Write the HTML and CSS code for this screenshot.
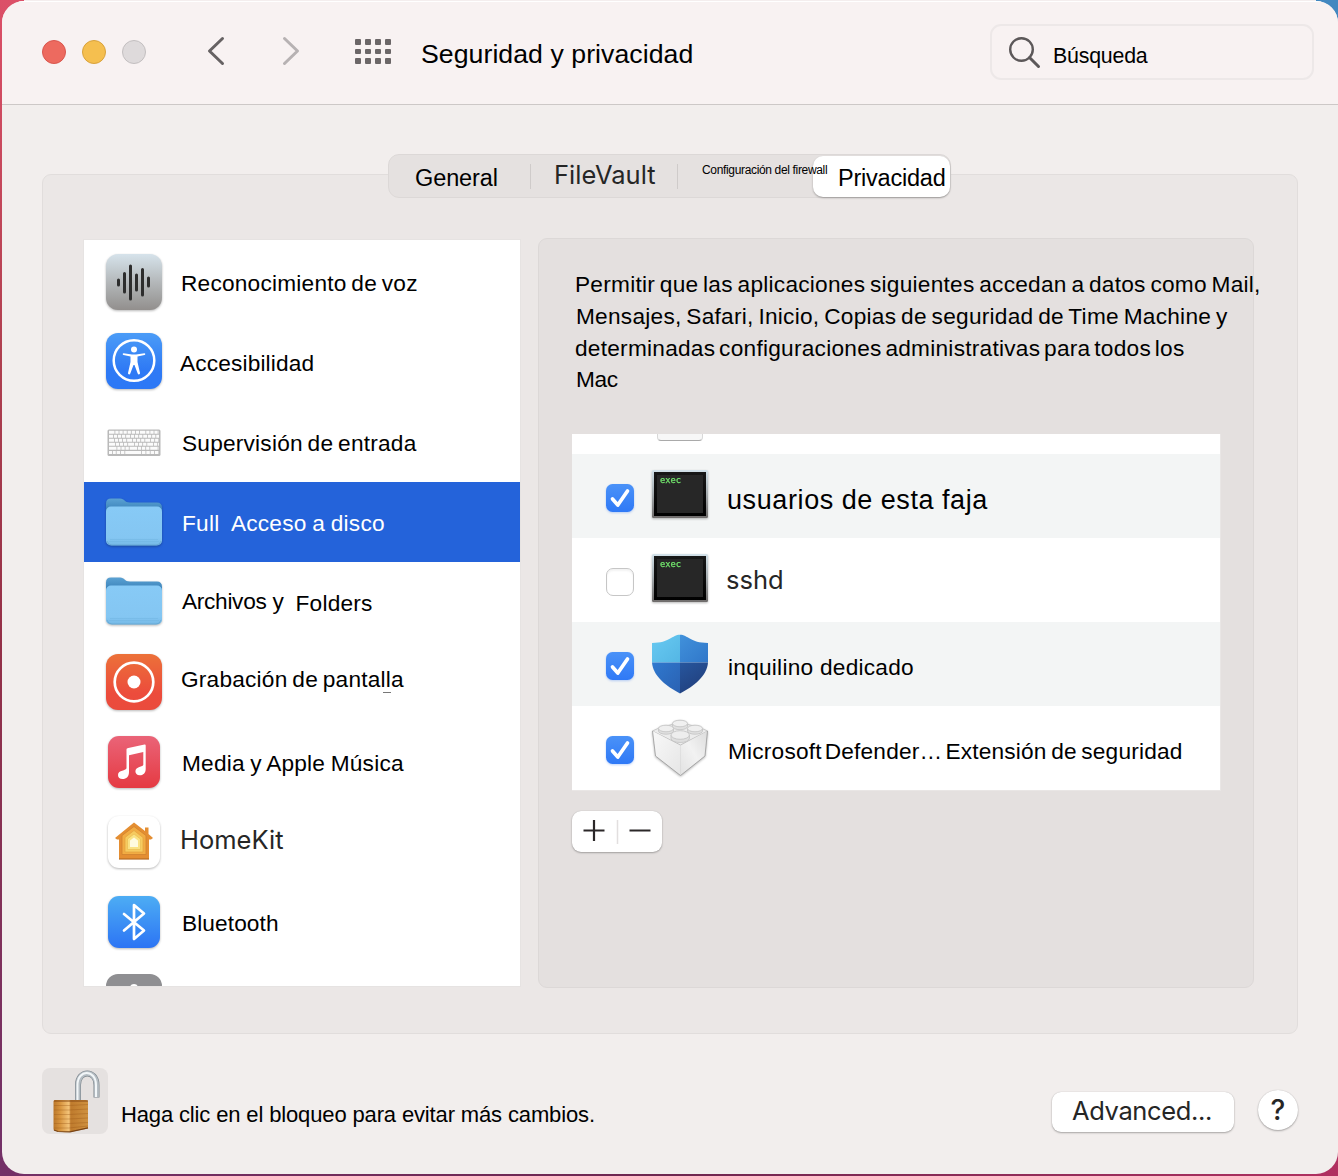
FILE: index.html
```html
<!DOCTYPE html>
<html lang="es">
<head>
<meta charset="utf-8">
<title>Seguridad y privacidad</title>
<link rel="stylesheet" href="styles.css">
</head>
<body>
<svg class="defs" width="0" height="0" aria-hidden="true">
  <defs>
    <linearGradient id="gVoice" x1="0" y1="0" x2="0" y2="1"><stop offset="0" stop-color="#d6e3eb"/><stop offset=".5" stop-color="#b4b8ba"/><stop offset="1" stop-color="#928f8d"/></linearGradient>
    <linearGradient id="gBlue" x1="0" y1="0" x2="0" y2="1"><stop offset="0" stop-color="#4b9cf7"/><stop offset=".65" stop-color="#2f7af5"/><stop offset="1" stop-color="#2c78f6"/></linearGradient>
    <linearGradient id="gCheck" x1="0" y1="0" x2="0" y2="1"><stop offset="0" stop-color="#4a92f8"/><stop offset="1" stop-color="#2f79f6"/></linearGradient>
    <linearGradient id="gBt" x1="0" y1="0" x2="0" y2="1"><stop offset="0" stop-color="#4dadf4"/><stop offset="1" stop-color="#2c74f4"/></linearGradient>
    <linearGradient id="gRec" x1="0" y1="0" x2="0" y2="1"><stop offset="0" stop-color="#ec7139"/><stop offset=".7" stop-color="#ec4c3c"/><stop offset="1" stop-color="#ea4b3c"/></linearGradient>
    <linearGradient id="gMusic" x1="0" y1="0" x2="0" y2="1"><stop offset="0" stop-color="#ea6478"/><stop offset="1" stop-color="#e53a42"/></linearGradient>
    <linearGradient id="gFront" x1="0" y1="0" x2="0" y2="1"><stop offset="0" stop-color="#87caf6"/><stop offset=".8" stop-color="#84c6f2"/><stop offset="1" stop-color="#75b9e6"/></linearGradient>
    <linearGradient id="gBack" x1="0" y1="0" x2="0" y2="1"><stop offset="0" stop-color="#5ba2d3"/><stop offset=".35" stop-color="#3f86bd"/></linearGradient>
    <linearGradient id="gFrame" x1="0" y1="0" x2="0" y2="1"><stop offset="0" stop-color="#d3e2ea"/><stop offset=".5" stop-color="#a5abae"/><stop offset="1" stop-color="#6f6c6b"/></linearGradient>
    <linearGradient id="gScreen" x1="0" y1="0" x2="0" y2="1"><stop offset="0" stop-color="#181818"/><stop offset="1" stop-color="#000"/></linearGradient>
    <linearGradient id="gS1" x1="0" y1="0" x2="1" y2="1"><stop offset="0" stop-color="#68caf2"/><stop offset="1" stop-color="#54b6e4"/></linearGradient>
    <linearGradient id="gS2" x1="0" y1="0" x2="1" y2="1"><stop offset="0" stop-color="#4191db"/><stop offset="1" stop-color="#3077c9"/></linearGradient>
    <linearGradient id="gS3" x1="0" y1="0" x2="1" y2="1"><stop offset="0" stop-color="#2f79cf"/><stop offset="1" stop-color="#2a61b2"/></linearGradient>
    <linearGradient id="gS4" x1="0" y1="0" x2=".6" y2="1"><stop offset="0" stop-color="#27569e"/><stop offset="1" stop-color="#213f7c"/></linearGradient>
    <linearGradient id="gWood" x1="0" y1="0" x2="1" y2="0"><stop offset="0" stop-color="#bb772a"/><stop offset=".2" stop-color="#d8953f"/><stop offset=".45" stop-color="#f4c47a"/><stop offset=".5" stop-color="#bf7b2d"/><stop offset="1" stop-color="#cf9140"/></linearGradient>
    <linearGradient id="gBrickL" x1="0" y1="0" x2="1" y2="1"><stop offset="0" stop-color="#f8f8f8"/><stop offset="1" stop-color="#e6e6e6"/></linearGradient>
    <linearGradient id="gBrickR" x1="1" y1="0" x2="0" y2="1"><stop offset="0" stop-color="#dcdcdc"/><stop offset=".5" stop-color="#f2f2f2"/><stop offset="1" stop-color="#e2e2e2"/></linearGradient>
    <symbol id="folder" viewBox="0 0 56 48">
      <path d="M0 5.500Q0 .5 5 .5H14C19 .5 18 4.500 24 4.500H51Q56 4.500 56 10V30H0Z" fill="url(#gBack)"/>
      <rect y="8.500" width="56" height="39" rx="5" fill="url(#gFront)"/>
      <path d="M4 41.500H52M3 43.500H53" stroke="#6db0dd" stroke-width=".4"/>
      <path d="M1 43Q2 47 6 47H50Q54 47 55 43" fill="none" stroke="#5f9fc9" stroke-width=".6"/>
    </symbol>
    <symbol id="terminal" viewBox="0 0 56 50">
      <rect y="1" width="56" height="48" rx="1.500" fill="url(#gFrame)"/>
      <rect x="2" y="3" width="52" height="44" fill="url(#gScreen)"/>
      <rect x="5" y="6" width="46" height="38" fill="#272727"/>
      <text class="exec" x="8" y="13.500" textLength="21" lengthAdjust="spacingAndGlyphs">exec</text>
    </symbol>
  </defs>
</svg>

<main class="window">
  <header class="titlebar">
    <div class="lights"><i class="red"></i><i class="yellow"></i><i class="grey"></i></div>
    <svg class="back" width="20" height="30" viewBox="0 0 20 30"><path d="M16.500 2.500 3.500 15l13 12.500" fill="none" stroke="#666263" stroke-width="3" stroke-linecap="round" stroke-linejoin="round"/></svg>
    <svg class="forward" width="20" height="30" viewBox="0 0 20 30"><path d="M3.500 2.500 16.500 15l-13 12.500" fill="none" stroke="#b7b2b3" stroke-width="3" stroke-linecap="round" stroke-linejoin="round"/></svg>
    <div class="grid"><i></i><i></i><i></i><i></i><i></i><i></i><i></i><i></i><i></i><i></i><i></i><i></i></div>
    <h1>Seguridad y privacidad</h1>
    <div class="search">
      <svg width="34" height="34" viewBox="0 0 34 34"><circle cx="13.500" cy="13.500" r="11.300" fill="none" stroke="#5c5859" stroke-width="2.400"/><path d="m21.500 21.500 9 9" stroke="#5c5859" stroke-width="3" stroke-linecap="round"/></svg>
      <span>Búsqueda</span>
    </div>
  </header>

  <section class="group">
    <nav class="tabs">
      <span class="tab general">General</span>
      <span class="tab filevault">FileVault</span>
      <span class="tab firewall">Configuración del firewall</span>
      <span class="tab privacy">Privacidad</span>
    </nav>
    <div class="columns">
      <ul class="services">
        <li>
          <svg class="shadow" width="56" height="56" viewBox="0 0 56 56"><rect width="56" height="56" rx="12" fill="url(#gVoice)"/><path d="M12.500 26v5M18.500 19.500v18.500M24.500 12v33M30.500 21v15M36.500 15.500v25.500M42.500 24v8" stroke="#2d2d2d" stroke-width="3" stroke-linecap="round"/></svg>
          <span class="l1">Reconocimiento de voz</span>
        </li>
        <li>
          <svg class="shadow up" width="56" height="56" viewBox="0 0 56 56"><rect width="56" height="56" rx="12" fill="url(#gBlue)"/><circle cx="28" cy="27.500" r="20.300" fill="none" stroke="#fff" stroke-width="2.500"/><circle cx="28" cy="16.500" r="3" fill="#fff"/><path d="M17.500 20.200 26 21.500h4l8.500-1.300c1 0 1 1.600 0 1.900L31.500 23.500V29l2.500 11c.2 1.500-1.800 2-2.300.5L28.500 32h-1l-3.200 8.500c-.5 1.500-2.500 1-2.300-.5L24.500 29v-5.500l-7-1.400c-1-.3-1-1.900 0-1.900Z" fill="#fff"/></svg>
          <span class="l2">Accesibilidad</span>
        </li>
        <li>
          <svg class="keyboard" width="56" height="30" viewBox="0 0 56 30"><rect x="1.500" y="1.500" width="53" height="26.500" rx="1.500" fill="#b9b9b9"/><g fill="none" stroke="#fbfbfb" stroke-width="3"><path d="M3 4.200H53" stroke-dasharray="5.500 .8 3.300 .8 3.300 .8 3.300 .8 3.300 .8 3.300 .8 3.300 .8"/><path d="M3 8.200H53" stroke-dasharray="4 .8 3.300 .8 3.300 .8 3.300 .8"/><path d="M3 12.200H53" stroke-dasharray="5 .8 3.300 .8 3.300 .8 3.300 .8"/><path d="M3 16.200H53" stroke-dasharray="6 .8 3.300 .8 3.300 .8 3.300 .8"/><path d="M3 20.200H53" stroke-dasharray="7.500 .8 3.300 .8 3.300 .8 3.300 .8"/><path d="M3 24.500H53" stroke-dasharray="3 .8 3 .8 3.500 .8 3.500 .8 16 .8 3.500 .8 3.500 .8 3.500 .8 3.500 .8"/></g></svg>
          <span class="l3">Supervisión de entrada</span>
        </li>
        <li class="selected">
          <svg class="shadow" width="56" height="48"><use href="#folder"/></svg>
          <span class="l4">Full<b></b>Acceso a disco</span>
        </li>
        <li>
          <svg class="shadow up" width="56" height="48"><use href="#folder"/></svg>
          <span class="l5">Archivos y</span><span class="l5b">Folders</span>
        </li>
        <li>
          <svg class="shadow" width="56" height="56" viewBox="0 0 56 56"><rect width="56" height="56" rx="12" fill="url(#gRec)"/><circle cx="28" cy="28" r="19.300" fill="none" stroke="#fff" stroke-width="2.700"/><circle cx="28" cy="28" r="6.500" fill="#fff"/></svg>
          <span class="l6">Grabación de pantalla</span>
        </li>
        <li>
          <svg class="shadow" width="56" height="52" viewBox="0 0 56 52"><rect x="2" width="52" height="52" rx="11" fill="url(#gMusic)"/><path d="M20.500 12.500 39 8.500c.8-.2 1.200.2 1.200 1V33c0 4-2.500 6.300-6 6.300-2.800 0-4.300-1.800-4.300-4 0-5 7.900-4 7.900-6.500V16l-14.300 3.200V36c0 4.500-2.500 7-6.500 7-2.800 0-4.500-1.600-4.500-4 0-5.300 8.500-4 8.500-7V14c0-1 .2-1.300 1.300-1.500Z" transform="translate(-.5)" fill="#fff"/></svg>
          <span class="l7">Media y Apple Música</span>
        </li>
        <li>
          <svg class="shadow" width="56" height="52" viewBox="0 0 56 52"><rect x="2" width="52" height="52" rx="11" fill="#fff"/><path d="M28 6.500 39 15v-3.500h3.500V18l4.500 4-2 1.500h-2V43H13V23.500h-2L9 22Z" fill="#e48e32"/><path d="M13 43H43" stroke="#b56a22" stroke-width="1.200"/><path d="m28 10.500 12 9V38.500H16V19.500Z" fill="#f2ac43" stroke="#cf812f" stroke-width=".8"/><path d="m28 14.500 9 7V36H19V21.500Z" fill="#f7cb5f" stroke="#e1a13f" stroke-width=".7"/><path d="m28 18 6.500 5v10.500h-13V23Z" fill="#fae284" stroke="#e9bd55" stroke-width=".7"/><path d="m28 21.500 4 3v6.500h-8v-6.500Z" fill="#fffbe0"/></svg>
          <span class="l8">HomeKit</span>
        </li>
        <li>
          <svg class="shadow" width="56" height="52" viewBox="0 0 56 52"><rect x="2" width="52" height="52" rx="11" fill="url(#gBt)"/><path d="M18 18 38 34.500 28 43V9L38 17.500 18 34.500" fill="none" stroke="#fff" stroke-width="2.700" stroke-linejoin="round" stroke-linecap="round"/></svg>
          <span class="l9">Bluetooth</span>
        </li>
        <li class="partial">
          <svg width="56" height="56" viewBox="0 0 56 56"><rect width="56" height="56" rx="12" fill="#8f8f92"/><circle cx="28" cy="14" r="4" fill="#fff"/></svg>
        </li>
      </ul>

      <section class="panel">
        <p><span class="p1">Permitir que las aplicaciones siguientes accedan a datos como Mail,</span><span class="p2">Mensajes, Safari, Inicio, Copias de seguridad de Time Machine y</span><span class="p3">determinadas configuraciones administrativas para todos los</span><span class="p4">Mac</span></p>
        <ul class="apps">
          <li class="sliver"><i></i></li>
          <li class="shade">
            <svg class="check" width="28" height="28" viewBox="0 0 28 28"><rect width="28" height="28" rx="6.500" fill="url(#gCheck)"/><path d="m6.500 15 5.300 6L21.500 7" fill="none" stroke="#fff" stroke-width="3.700" stroke-linecap="round" stroke-linejoin="round"/></svg>
            <svg class="shadow term" width="56" height="50"><use href="#terminal"/></svg>
            <span class="a1">usuarios de esta faja</span>
          </li>
          <li>
            <i class="unchecked"></i>
            <svg class="shadow term" width="56" height="50"><use href="#terminal"/></svg>
            <span class="a2">sshd</span>
          </li>
          <li class="shade">
            <svg class="check" width="28" height="28" viewBox="0 0 28 28"><rect width="28" height="28" rx="6.500" fill="url(#gCheck)"/><path d="m6.500 15 5.300 6L21.500 7" fill="none" stroke="#fff" stroke-width="3.700" stroke-linecap="round" stroke-linejoin="round"/></svg>
            <svg width="56" height="60" viewBox="0 0 56 60"><path d="M28 .8C20 .8 18 9 0 9v19.500h28Z" fill="url(#gS1)"/><path d="M28 .8C36 .8 38 9 56 9v19.500H28Z" fill="url(#gS2)"/><path d="M0 28.500C1 42 14 52 28 59.500v-31Z" fill="url(#gS3)"/><path d="M56 28.500C55 42 42 52 28 59.500v-31Z" fill="url(#gS4)"/></svg>
            <span class="a3">inquilino dedicado</span>
          </li>
          <li>
            <svg class="check" width="28" height="28" viewBox="0 0 28 28"><rect width="28" height="28" rx="6.500" fill="url(#gCheck)"/><path d="m6.500 15 5.300 6L21.500 7" fill="none" stroke="#fff" stroke-width="3.700" stroke-linecap="round" stroke-linejoin="round"/></svg>
            <svg class="shadow brick" width="56" height="58" viewBox="0 0 56 58"><path d="M.5 12 8 8.500 20 5.500 28 2l8 3.500 12 3L55.500 12l-27 14Z" fill="#ececec" stroke="#b8b8b8" stroke-width=".7"/><path d="M.5 12 28.500 26.500v30L3.500 37Z" fill="url(#gBrickL)"/><path d="M55.500 12 28.500 26.500v30L53 37Z" fill="url(#gBrickR)"/><path d="m.5 12 3 25 25 19.500L53 37l2.500-25" fill="none" stroke="#999" stroke-width=".8"/><g stroke="#c2c2c2" stroke-width=".8"><path d="M20.500 4.500v3a7.500 3.200 0 0 0 15 0v-3" fill="#e0e0e0"/><ellipse cx="28" cy="4.500" rx="7.500" ry="3.300" fill="#f0f0f0"/><path d="M6.500 9.500v2.500a7.500 3.200 0 0 0 15 0V9.500" fill="#e0e0e0"/><ellipse cx="14" cy="9.500" rx="7.500" ry="3.300" fill="#efefef"/><path d="M35.500 9.500v2.500a7.500 3.200 0 0 0 15 0V9.500" fill="#e0e0e0"/><ellipse cx="43" cy="9.500" rx="7.500" ry="3.300" fill="#efefef"/><path d="M19 16v3.500a9.200 4 0 0 0 18.400 0V16" fill="#dedede"/><ellipse cx="28.200" cy="16" rx="9.200" ry="4.300" fill="#ededed"/></g></svg>
            <span class="a4">Microsoft<b></b>Defender…<b></b>Extensión de seguridad</span>
          </li>
        </ul>
        <div class="plusminus">
          <svg width="91" height="41" viewBox="0 0 91 41"><path d="M11.500 19.500h21M22 9v21M57.500 19.500h21" stroke="#2b2728" stroke-width="2.200"/><path d="M45.500 9v24" stroke="#e2dfdf" stroke-width="1.500"/></svg>
        </div>
      </section>
    </div>
  </section>

  <footer>
    <div class="lock">
      <svg width="66" height="66" viewBox="0 0 66 66"><g fill="none"><path d="M36 32V17C36 1.500 54.500 1.500 54.500 17V29.500" stroke="#7d868d" stroke-width="6"/><path d="M36 32V17C36 1.500 54.500 1.500 54.500 17V29" stroke="#b4bcc2" stroke-width="4.800"/><path d="M35.500 32V17C35.500 1 54 1 54 17V29" stroke="#f2f6f8" stroke-width="2"/></g><path d="M11.500 33.500Q11.500 32 13 32H44Q46 32 46 34V60.500L28 64Q18 64.500 13 63Q11.500 62.500 11.500 61Z" fill="url(#gWood)"/><path d="M12 37.500H27L46 36.500M12 42H27L46 41M12 46.500H27L46 45.500M12 51H27L46 50M12 55.500H27L46 54.500M12 60H27L46 58" fill="none" stroke="#995516" stroke-opacity=".35" stroke-width="1.200"/><path d="M12 33H46" stroke="#854915" stroke-width="1"/><path d="m12 62 4 1.500 12 .3 18-4" fill="none" stroke="#7a4517" stroke-width="1.200"/></svg>
    </div>
    <span class="hint">Haga clic en el bloqueo para evitar más cambios.</span>
    <button class="advanced">Advanced...</button>
    <button class="help">?</button>
  </footer>
</main>
</body>
</html>
```
FILE: styles.css
```css
* { box-sizing: border-box; }
html, body { height: 100%; }
body {
  margin: 0;
  padding: 1px 0 2px 2px;
  overflow: hidden;
  font-family: "Liberation Sans", Arial, sans-serif;
  color: #000;
  background:
    linear-gradient(#f4eeee, #f4eeee) 24px 0 / 1292px 1px no-repeat,
    linear-gradient(#4288c0, #4288c0) 100% 0 / 40px 60px no-repeat,
    linear-gradient(90deg, #743067, #6e264f 50%, #b03060) 0 100% / 100% 30px no-repeat,
    linear-gradient(#dc5068, #b04050 30%, #943048 55%, #743067 95%);
}
.defs { position: absolute; }
h1, p, ul { margin: 0; padding: 0; font-weight: normal; }
ul { list-style: none; }
svg { display: block; flex: none; }
.window {
  height: 1173px;
  display: flex;
  flex-direction: column;
  border-radius: 22px;
  overflow: hidden;
  background: #f2eeed;
}

/* Title bar */
.titlebar {
  height: 104px;
  flex: none;
  display: flex;
  align-items: flex-start;
  background: #f8f2f2;
  border-top: 1px solid #fff;
  border-bottom: 1px solid #cdc8c7;
}
.lights { display: flex; gap: 16px; padding: 38px 0 0 40px; }
.lights i { width: 24px; height: 24px; border-radius: 50%; border: 1px solid; }
.lights .red { background: #ed6a5f; border-color: #d9564e; }
.lights .yellow { background: #f5bf4f; border-color: #d9a23c; }
.lights .grey { background: #dedadb; border-color: #c3bfc0; }
.back { margin: 34px 0 0 60px; }
.forward { margin: 34px 0 0 55px; }
.grid { display: grid; grid-template-columns: repeat(4, 6px); gap: 4px; margin: 37px 0 0 54px; }
.grid i { width: 5.500px; height: 5.500px; border-radius: 1px; background: #6b6667; }
h1 { font-size: 26.670px; line-height: 32px; margin: 36px 0 0 30px; letter-spacing: .05px; white-space: nowrap; }
.search {
  width: 324px;
  height: 56px;
  margin: 22px 24px 0 auto;
  border: 2px solid #ede8e8;
  border-radius: 11px;
  display: flex;
  padding: 10px 0 0 16px;
}
.search span { font-size: 21.330px; line-height: 24px; margin: 8px 0 0 11px; letter-spacing: -.2px; }

/* Grouping box and tabs */
.group {
  margin: 69px 40px 0;
  height: 860px;
  flex: none;
  background: #ebe7e6;
  border: 1px solid #e1dddc;
  border-radius: 9px;
}
.tabs {
  width: 563px;
  height: 44px;
  margin: -21px 0 0 345px;
  display: flex;
  background: #e5e1e0;
  border: 1px solid #dcd8d7;
  border-radius: 11px;
}
.tab { white-space: nowrap; }
.general { width: 141px; padding: 10px 0 0 26px; font-size: 23.500px; line-height: 27px; letter-spacing: -.1px; }
.filevault {
  width: 148px;
  height: 25px;
  margin-top: 9px;
  padding-left: 23px;
  border: solid #cfcbca;
  border-width: 0 1px;
  font: 25.500px/22px Inter, sans-serif;
  color: #262626;
}
.firewall { position: relative; z-index: 1; width: 135px; padding: 8px 0 0 24px; font-size: 12px; line-height: 14px; letter-spacing: -.34px; }
.privacy {
  width: 137px;
  height: 41px;
  margin-top: 1px;
  padding: 9px 0 0 25px;
  font-size: 23.500px;
  line-height: 27px;
  letter-spacing: -.22px;
  background: #fff;
  border-radius: 10px;
  box-shadow: 0 1px 2px rgba(0, 0, 0, .3);
}
.columns { display: flex; align-items: flex-start; padding: 40px 0 0 41px; }

/* Service list */
.services {
  width: 436px;
  height: 746px;
  margin: 2px 1px 0 0;
  padding-top: 2px;
  overflow: hidden;
  background: #fff;
  box-shadow: 0 0 0 1px #e6e3e2;
}
.services li { height: 80px; display: flex; align-items: center; padding-left: 22px; }
.services li > span { margin: 2px 0 0 19px; font-size: 22.670px; line-height: 26px; letter-spacing: .22px; word-spacing: -1.700px; white-space: nowrap; }
.services .selected { background: #2463da; color: #fff; }
.services .partial { align-items: flex-start; padding-top: 12px; }
.shadow { filter: drop-shadow(0 1px 1px rgba(0, 0, 0, .28)); }
.up { margin-top: -2px; }
.keyboard { margin-top: 1px; }
.services .l2 { margin-left: 18px; letter-spacing: .15px; }
.services .l3, .services .l4, .services .l7, .services .l9 { margin-left: 20px; }
.services .l4 { word-spacing: -.800px; }
.services .l7 { word-spacing: -1px; }
.services .l9 { letter-spacing: .1px; }
.l4 b { display: inline-block; width: 11.500px; }
.services .l5 { margin: -2px 0 0 20px; letter-spacing: -.3px; word-spacing: 0; }
.services .l5b { margin-left: 12px; }
.services .l6 { margin-top: -6px; }
.l6::after { content: ""; display: block; width: 8px; height: 1px; margin: 0 0 -1px 202px; background: #777; }
.services .l8 { margin: -4px 0 0 18px; font-family: Inter, sans-serif; font-size: 25.500px; letter-spacing: 0; color: #262626; }

/* Privacy panel */
.panel {
  width: 716px;
  height: 750px;
  margin-left: 17px;
  padding: 29px 0 0 33px;
  background: #e4e0df;
  border: 1px solid #dcd8d7;
  border-radius: 9px;
}
.panel p { font-size: 22.670px; line-height: 32px; height: 166px; letter-spacing: .25px; word-spacing: -1.800px; }
.panel p span { display: block; white-space: nowrap; margin-left: 3px; }
.panel p .p2 { word-spacing: -1.700px; }
.panel p .p3 { word-spacing: -2.700px; }
.panel p .p4 { margin-top: -1px; letter-spacing: -.3px; }
.panel p .p2, .panel p .p4 { padding-left: 1px; }
.apps { width: 649px; height: 357px; background: #fff; border: 1px solid #e9e6e5; border-width: 0 1px 1px 0; }
.apps li { height: 84px; display: flex; align-items: center; padding: 0 0 0 34px; }
.apps .sliver { height: 20px; align-items: flex-start; padding-left: 85px; }
.sliver i { width: 46px; height: 7px; background: #f7f7f7; border: 1px solid #d8d8d8; border-top: 0; border-bottom-color: #aaa; border-radius: 0 0 4px 4px; }
.apps .shade { background: #f3f5f5; }
.check, .unchecked { flex: none; margin: 4px 18px 0 0; }
.check { filter: drop-shadow(0 1px 1px rgba(40, 110, 240, .3)); }
.unchecked { width: 28px; height: 28px; border: 1px solid #c6c6c6; border-radius: 7px; background: #fff; box-shadow: inset 0 2px 2px rgba(0, 0, 0, .05); }
.term { margin-top: -4px; }
.exec { font: 8.500px "DejaVu Sans Mono", monospace; fill: #72e66d; stroke: #72e66d; stroke-width: .25px; }
.apps span { margin: 6px 0 0 19px; font-size: 22.670px; line-height: 28px; white-space: nowrap; }
.apps .a1 { font-size: 27px; letter-spacing: .6px; word-spacing: -.3px; margin-top: 8px; }
.apps .a2 { margin: 0 0 0 18px; font-family: Inter, sans-serif; font-size: 25.500px; color: #262626; }
.apps .a3 { letter-spacing: .25px; margin-left: 20px; }
.apps .a4 { letter-spacing: .2px; word-spacing: -2px; margin-left: 20px; }
.a4 b { display: inline-block; width: 3px; }
.plusminus { width: 90px; height: 41px; margin-top: 20px; background: #fff; border-radius: 9px; box-shadow: 0 1px 2px rgba(0, 0, 0, .28), 0 0 1px rgba(0, 0, 0, .2); }

/* Footer */
footer { display: flex; align-items: flex-start; padding: 34px 40px 0 40px; }
.lock { width: 66px; height: 66px; background: #e5e1e0; border-radius: 8px; }
.hint { font-size: 22px; line-height: 26px; margin: 34px 0 0 13px; letter-spacing: -.14px; white-space: nowrap; }
button { padding: 0; border: 0; background: #fff; color: #262626; font-family: Inter, sans-serif; box-shadow: 0 1px 2px rgba(0, 0, 0, .3), 0 0 1px rgba(0, 0, 0, .2); }
.advanced { width: 182px; height: 40px; margin: 24px 24px 0 auto; padding: 0 2px 3px 0; border-radius: 9px; font-size: 25.500px; letter-spacing: -.35px; }
.help { width: 40px; height: 40px; margin-top: 22px; border-radius: 50%; font-size: 28px; font-weight: 500; }
```
